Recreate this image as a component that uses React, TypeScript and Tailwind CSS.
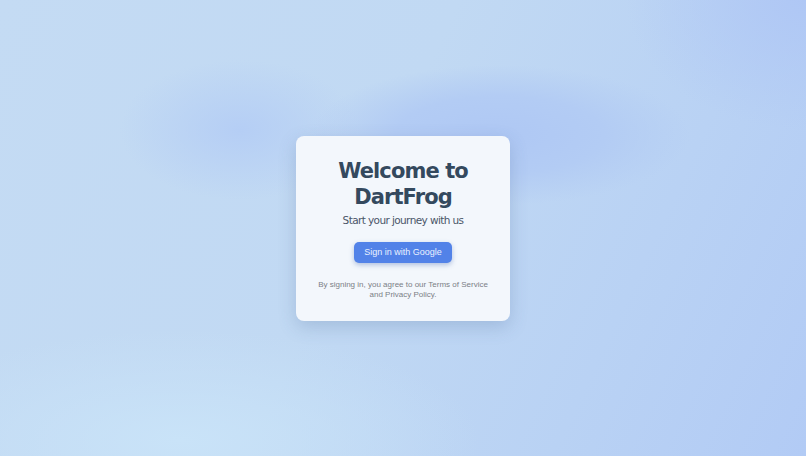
import React from 'react';

export default function App() {
  return (
    <div className="flex h-[456px] w-[806px] items-center justify-center bg-[image:radial-gradient(ellipse_190px_70px_at_500px_135px,#afc8f4_0%,#b3ccf4_55%,rgba(180,205,244,0)_100%),radial-gradient(ellipse_120px_70px_at_240px_130px,#b5cef5_0%,rgba(181,206,245,0)_100%),radial-gradient(ellipse_300px_110px_at_180px_440px,#c9e3f8_0%,rgba(201,227,248,0)_100%),radial-gradient(ellipse_180px_130px_at_806px_0px,#afc7f5_0%,rgba(175,199,245,0)_100%),linear-gradient(115deg,#c4dbf3_0%,#c1d9f3_45%,#b9d2f4_75%,#b2cbf5_100%)] font-['DejaVu_Sans',sans-serif]">

      {/* CARD */}
      <div className="flex w-[214px] flex-col items-center rounded-lg bg-[#f3f7fc] px-3 pb-[21px] pt-[22px] text-center shadow-[0_6px_18px_rgba(60,90,140,0.22)]">

        <h1 className="text-[21px] font-bold leading-[26px] tracking-[-0.9px] text-[#34495e]">
          Welcome to
          <br />
          DartFrog
        </h1>

        <p className="mt-[2px] text-[10.5px] leading-[16px] tracking-[-0.6px] text-[#4a5568]">
          Start your journey with us
        </p>

        <button className="mt-[14px] rounded-[5px] bg-[#5282e8] px-[10px] py-[4px] font-['Liberation_Sans',sans-serif] text-[9px] leading-[13px] text-[#eaf1ff] shadow-[0_2px_5px_rgba(50,90,170,0.35)]">
          Sign in with Google
        </button>

        <p className="mt-[17px] whitespace-nowrap font-['Liberation_Sans',sans-serif] text-[8px] leading-[10px] text-[#7b7f86]">
          By signing in, you agree to our Terms of Service
          <br />
          and Privacy Policy.
        </p>

      </div>
    </div>
  );
}
